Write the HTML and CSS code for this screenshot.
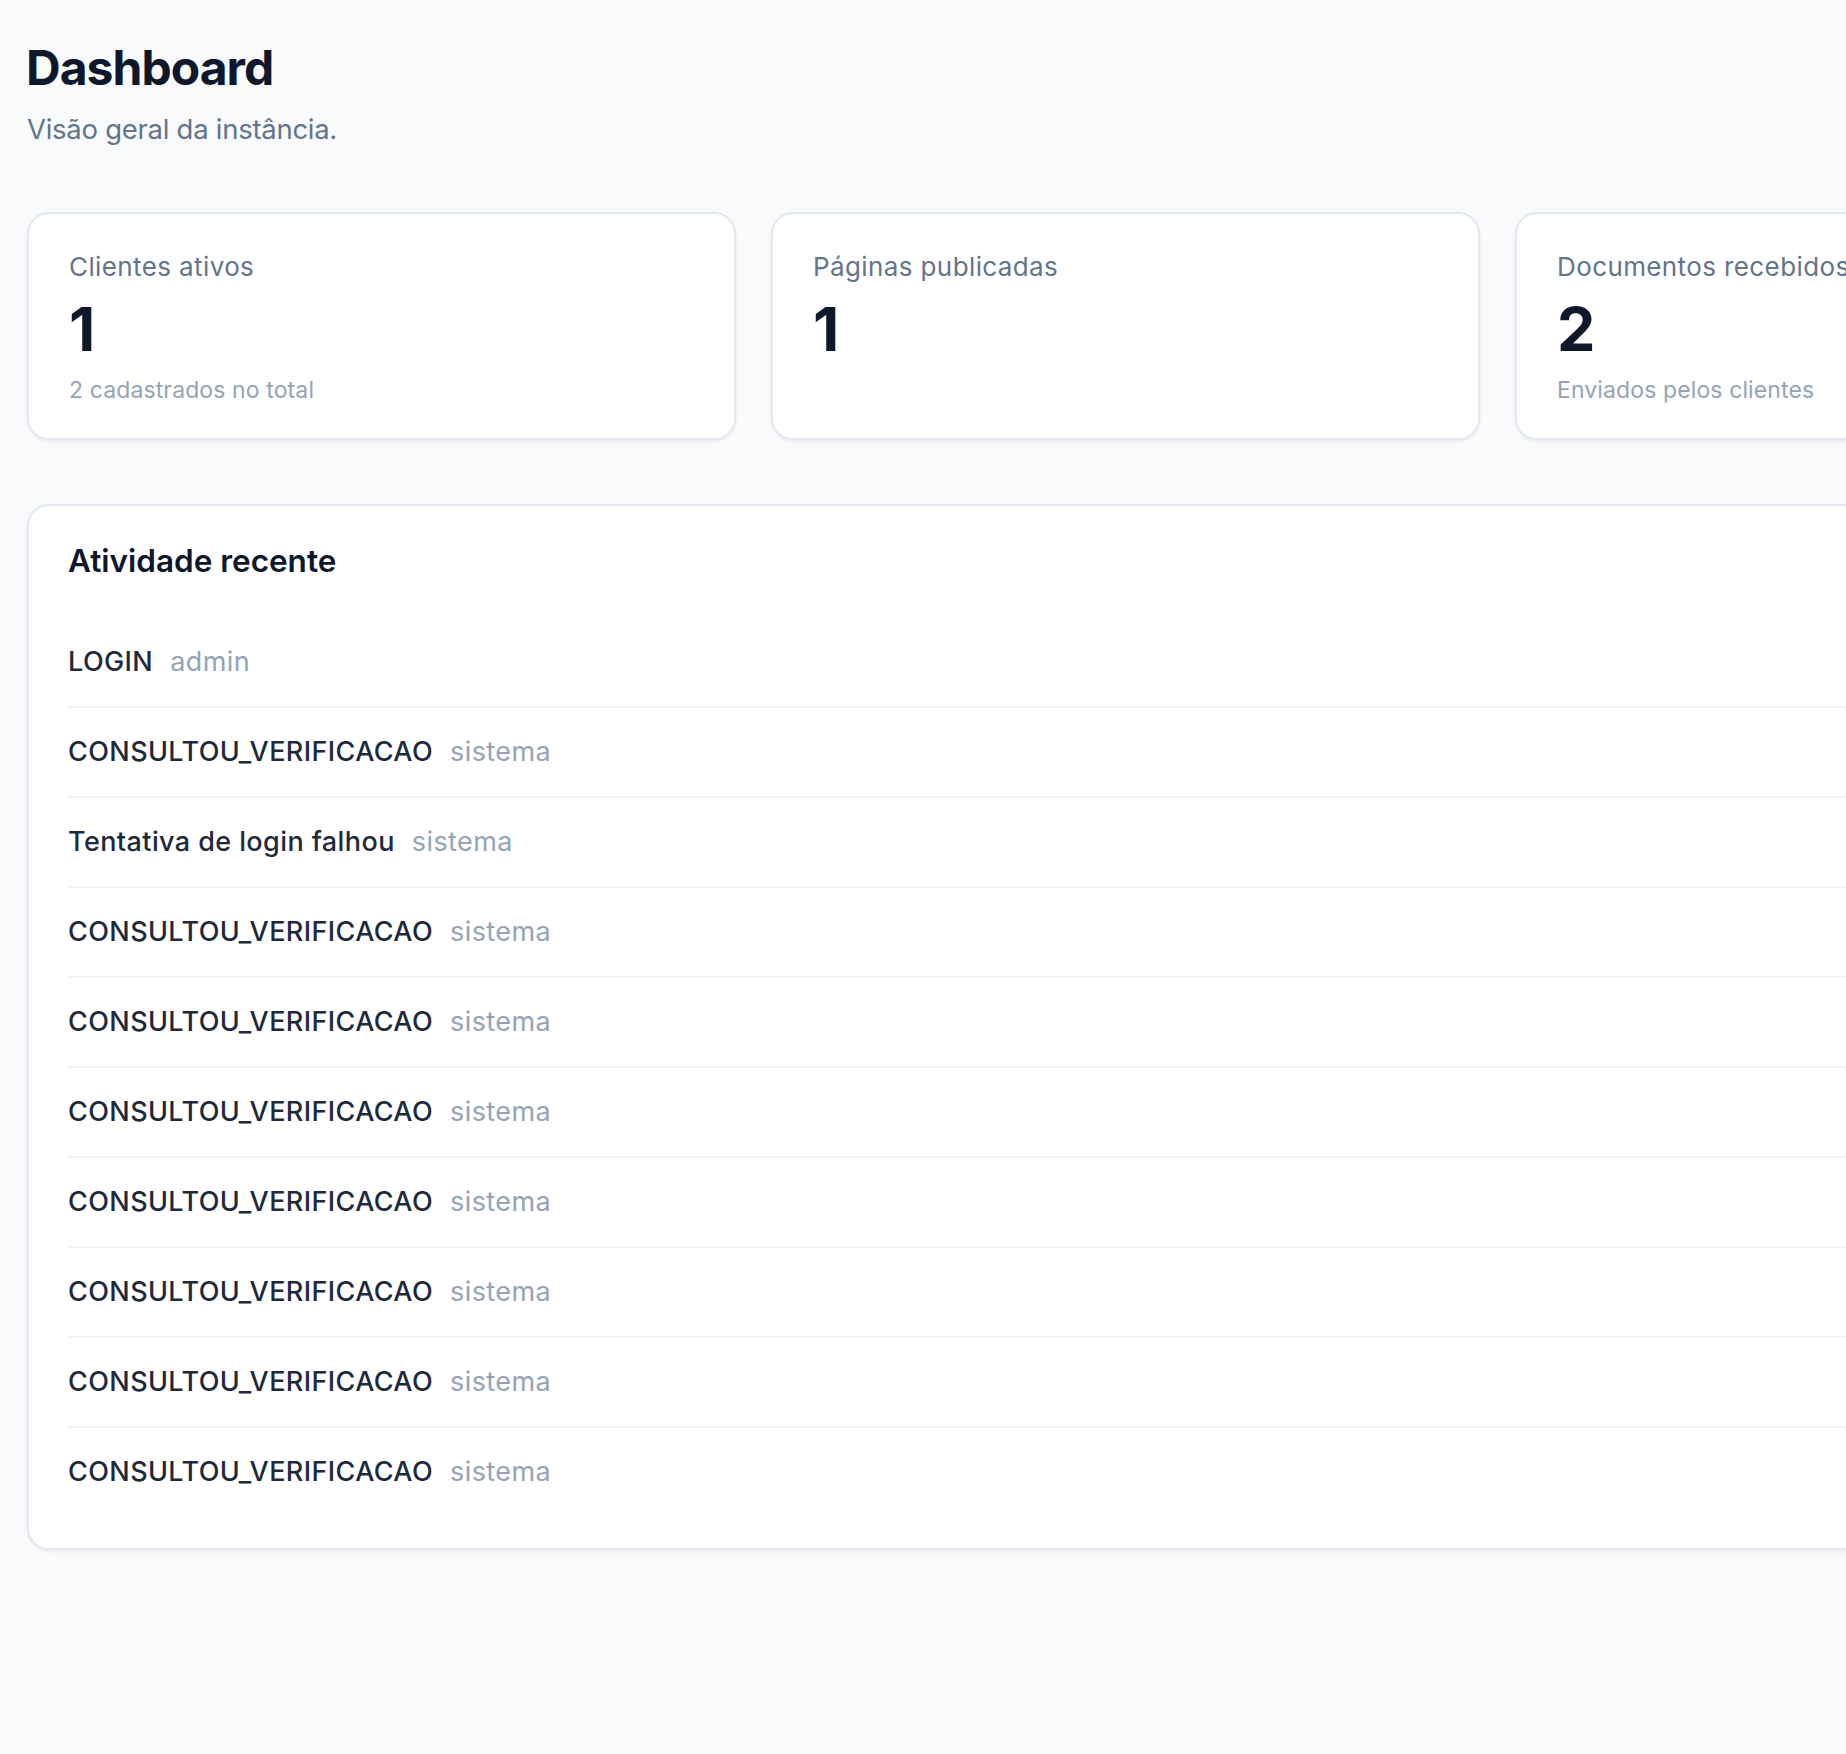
FILE: index.html
```html
<!DOCTYPE html>
<html lang="pt-BR">
<head>
<meta charset="utf-8">
<title>Dashboard</title>
<link rel="stylesheet" href="styles.css">
</head>
<body>
<main class="page">
  <header class="page-head">
    <h1 class="page-title">Dashboard</h1>
    <p class="page-sub">Visão geral da instância.</p>
  </header>

  <section class="stats">
    <div class="card">
      <div class="card-label">Clientes ativos</div>
      <div class="card-value">1</div>
      <div class="card-note">2 cadastrados no total</div>
    </div>
    <div class="card">
      <div class="card-label">Páginas publicadas</div>
      <div class="card-value">1</div>
    </div>
    <div class="card">
      <div class="card-label">Documentos recebidos</div>
      <div class="card-value">2</div>
      <div class="card-note">Enviados pelos clientes</div>
    </div>
  </section>

  <section class="panel">
    <h2 class="panel-title">Atividade recente</h2>
    <ul class="activity">
      <li class="row"><span class="act">LOGIN</span><span class="who">admin</span></li>
      <li class="row"><span class="act">CONSULTOU_VERIFICACAO</span><span class="who">sistema</span></li>
      <li class="row"><span class="act">Tentativa de login falhou</span><span class="who">sistema</span></li>
      <li class="row"><span class="act">CONSULTOU_VERIFICACAO</span><span class="who">sistema</span></li>
      <li class="row"><span class="act">CONSULTOU_VERIFICACAO</span><span class="who">sistema</span></li>
      <li class="row"><span class="act">CONSULTOU_VERIFICACAO</span><span class="who">sistema</span></li>
      <li class="row"><span class="act">CONSULTOU_VERIFICACAO</span><span class="who">sistema</span></li>
      <li class="row"><span class="act">CONSULTOU_VERIFICACAO</span><span class="who">sistema</span></li>
      <li class="row"><span class="act">CONSULTOU_VERIFICACAO</span><span class="who">sistema</span></li>
      <li class="row"><span class="act">CONSULTOU_VERIFICACAO</span><span class="who">sistema</span></li>
    </ul>
  </section>
</main>
</body>
</html>
```
FILE: styles.css
```css
* { box-sizing: border-box; }

html, body {
  margin: 0;
  padding: 0;
  background: #f8fafc;
  overflow: hidden;
}

body {
  font-family: Inter, "Noto Sans", "Liberation Sans", sans-serif;
  color: #0f172a;
}

.page {
  width: 2253px;
  padding: 40px 0 60px 27px;
}

.page-head { margin: 0; }

.page-title {
  margin: 0 0 0 -1px;
  font-size: 48px;
  line-height: 56px;
  font-weight: 700;
  letter-spacing: -0.02em;
  color: #0f172a;
}

.page-sub {
  margin: 12px 0 0;
  font-size: 27.5px;
  line-height: 42px;
  letter-spacing: -0.01em;
  color: #64748b;
}

.stats {
  display: grid;
  grid-template-columns: repeat(3, 709px);
  gap: 35px;
  margin-top: 62px;
}

.card {
  background: #ffffff;
  border: 2px solid #e2e8f0;
  border-radius: 22px;
  box-shadow: 0 2px 3px rgba(15, 23, 42, 0.06);
  padding: 35px 40px 30px;
  min-height: 228px;
}

.card-label {
  font-size: 26px;
  line-height: 35px;
  letter-spacing: 0.015em;
  color: #64748b;
}

.card-value {
  margin-top: 15px;
  font-size: 61px;
  line-height: 61px;
  font-weight: 700;
  color: #0f172a;
}

.card-note {
  margin-top: 15px;
  font-size: 23px;
  line-height: 31px;
  letter-spacing: 0.005em;
  color: #94a3b8;
}

.panel {
  margin-top: 64px;
  width: 2197px;
  background: #ffffff;
  border: 2px solid #e2e8f0;
  border-radius: 22px;
  box-shadow: 0 2px 3px rgba(15, 23, 42, 0.06);
  padding: 31px 39px 32px;
}

.panel-title {
  margin: 0;
  font-size: 31.5px;
  line-height: 48px;
  font-weight: 600;
  color: #0f172a;
}

.activity {
  list-style: none;
  margin: 33px 0 0;
  padding: 0;
}

.row {
  display: flex;
  align-items: center;
  gap: 17px;
  height: 90px;
  padding: 0;
  border-bottom: 2px solid #f1f5f9;
  font-size: 27px;
  line-height: 40px;
  letter-spacing: 0.015em;
}

.row:last-child {
  border-bottom: 0;
  height: 88px;
}

.act {
  color: #1e293b;
  font-weight: 450;
}

.who {
  color: #94a3b8;
}
```
